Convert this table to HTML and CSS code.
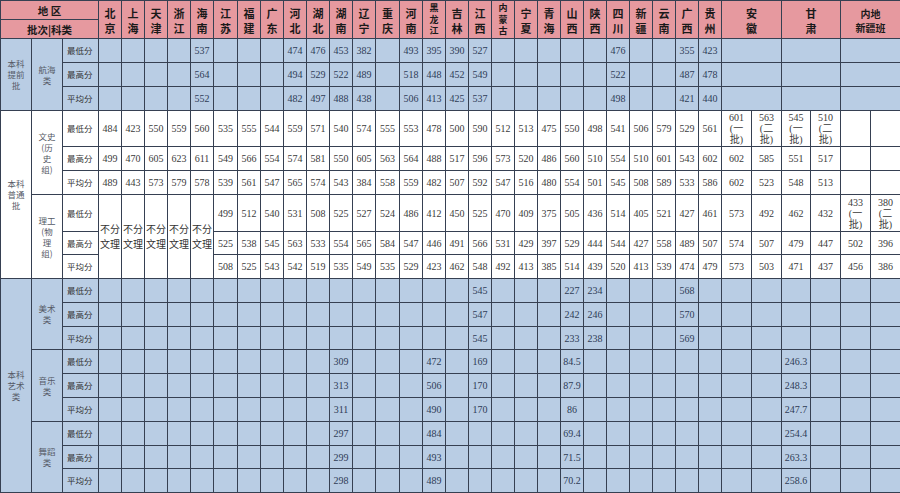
FILE: index.html
```html
<!DOCTYPE html>
<html lang="zh-CN">
<head>
<meta charset="utf-8">
<title>录取分数</title>
<link rel="stylesheet" href="styles.css">
</head>
<body>
<table class="score">
<colgroup>
<col class="c31"><col class="c31"><col class="c36">
<col class="c23"><col class="c23"><col class="c23"><col class="c23"><col class="c23"><col class="c24"><col class="c23"><col class="c23"><col class="c23"><col class="c23"><col class="c23"><col class="c23"><col class="c24"><col class="c23"><col class="c23"><col class="c23"><col class="c23"><col class="c23"><col class="c23"><col class="c23"><col class="c23"><col class="c23"><col class="c23"><col class="c23"><col class="c23"><col class="c23"><col class="c23">
<col class="c30"><col class="c30"><col class="c29"><col class="c30"><col class="c30"><col class="c30">
</colgroup>
<thead>
<tr class="h1">
<th colspan="3">地 区</th>
<th rowspan="2">北<br>京</th><th rowspan="2">上<br>海</th><th rowspan="2">天<br>津</th><th rowspan="2">浙<br>江</th><th rowspan="2">海<br>南</th><th rowspan="2">江<br>苏</th><th rowspan="2">福<br>建</th><th rowspan="2">广<br>东</th><th rowspan="2">河<br>北</th><th rowspan="2">湖<br>北</th><th rowspan="2">湖<br>南</th><th rowspan="2">辽<br>宁</th><th rowspan="2">重<br>庆</th><th rowspan="2">河<br>南</th><th rowspan="2" class="tri">黑<br>龙<br>江</th><th rowspan="2">吉<br>林</th><th rowspan="2">江<br>西</th><th rowspan="2" class="tri">内<br>蒙<br>古</th><th rowspan="2">宁<br>夏</th><th rowspan="2">青<br>海</th><th rowspan="2">山<br>西</th><th rowspan="2">陕<br>西</th><th rowspan="2">四<br>川</th><th rowspan="2">新<br>疆</th><th rowspan="2">云<br>南</th><th rowspan="2">广<br>西</th><th rowspan="2">贵<br>州</th>
<th rowspan="2" colspan="2">安<br>徽</th><th rowspan="2" colspan="2">甘<br>肃</th><th rowspan="2" colspan="2" class="sm">内地<br>新疆班</th>
</tr>
<tr class="h2"><th colspan="3">批次|科类</th></tr>
</thead>
<tbody>
<tr class="blue r24"><td rowspan="3" class="grp">本科<br>提前<br>批</td><td rowspan="3" class="grp">航海<br>类</td><td class="lb">最低分</td><td></td><td></td><td></td><td></td><td>537</td><td></td><td></td><td></td><td>474</td><td>476</td><td>453</td><td>382</td><td></td><td>493</td><td>395</td><td>390</td><td>527</td><td></td><td></td><td></td><td></td><td></td><td>476</td><td></td><td></td><td>355</td><td>423</td><td colspan="2"></td><td colspan="2"></td><td colspan="2"></td></tr>
<tr class="blue r24"><td class="lb">最高分</td><td></td><td></td><td></td><td></td><td>564</td><td></td><td></td><td></td><td>494</td><td>529</td><td>522</td><td>489</td><td></td><td>518</td><td>448</td><td>452</td><td>549</td><td></td><td></td><td></td><td></td><td></td><td>522</td><td></td><td></td><td>487</td><td>478</td><td colspan="2"></td><td colspan="2"></td><td colspan="2"></td></tr>
<tr class="blue r24"><td class="lb">平均分</td><td></td><td></td><td></td><td></td><td>552</td><td></td><td></td><td></td><td>482</td><td>497</td><td>488</td><td>438</td><td></td><td>506</td><td>413</td><td>425</td><td>537</td><td></td><td></td><td></td><td></td><td></td><td>498</td><td></td><td></td><td>421</td><td>440</td><td colspan="2"></td><td colspan="2"></td><td colspan="2"></td></tr>

<tr class="white r36"><td rowspan="6" class="grp">本科<br>普通<br>批</td><td rowspan="3" class="grp">文史<br>(历<br>史<br>组)</td><td class="lb">最低分</td><td>484</td><td>423</td><td>550</td><td>559</td><td>560</td><td>535</td><td>555</td><td>544</td><td>559</td><td>571</td><td>540</td><td>574</td><td>555</td><td>553</td><td>478</td><td>500</td><td>590</td><td>512</td><td>513</td><td>475</td><td>550</td><td>498</td><td>541</td><td>506</td><td>579</td><td>529</td><td>561</td><td>601<br>(一<br>批)</td><td>563<br>(二<br>批)</td><td>545<br>(一<br>批)</td><td>510<br>(二<br>批)</td><td></td><td></td></tr>
<tr class="white r24"><td class="lb">最高分</td><td>499</td><td>470</td><td>605</td><td>623</td><td>611</td><td>549</td><td>566</td><td>554</td><td>574</td><td>581</td><td>550</td><td>605</td><td>563</td><td>564</td><td>488</td><td>517</td><td>596</td><td>573</td><td>520</td><td>486</td><td>560</td><td>510</td><td>554</td><td>510</td><td>601</td><td>543</td><td>602</td><td>602</td><td>585</td><td>551</td><td>517</td><td></td><td></td></tr>
<tr class="white r24"><td class="lb">平均分</td><td>489</td><td>443</td><td>573</td><td>579</td><td>578</td><td>539</td><td>561</td><td>547</td><td>565</td><td>574</td><td>543</td><td>384</td><td>558</td><td>559</td><td>482</td><td>507</td><td>592</td><td>547</td><td>516</td><td>480</td><td>554</td><td>501</td><td>545</td><td>508</td><td>589</td><td>533</td><td>586</td><td>602</td><td>523</td><td>548</td><td>513</td><td></td><td></td></tr>

<tr class="white r37"><td rowspan="3" class="grp">理工<br>(物<br>理<br>组)</td><td class="lb">最低分</td><td rowspan="3" class="nf">不分<br>文理</td><td rowspan="3" class="nf">不分<br>文理</td><td rowspan="3" class="nf">不分<br>文理</td><td rowspan="3" class="nf">不分<br>文理</td><td rowspan="3" class="nf">不分<br>文理</td><td>499</td><td>512</td><td>540</td><td>531</td><td>508</td><td>525</td><td>527</td><td>524</td><td>486</td><td>412</td><td>450</td><td>525</td><td>470</td><td>409</td><td>375</td><td>505</td><td>436</td><td>514</td><td>405</td><td>521</td><td>427</td><td>461</td><td>573</td><td>492</td><td>462</td><td>432</td><td>433<br>(一<br>批)</td><td>380<br>(二<br>批)</td></tr>
<tr class="white r23"><td class="lb">最高分</td><td>525</td><td>538</td><td>545</td><td>563</td><td>533</td><td>554</td><td>565</td><td>584</td><td>547</td><td>446</td><td>491</td><td>566</td><td>531</td><td>429</td><td>397</td><td>529</td><td>444</td><td>544</td><td>427</td><td>558</td><td>489</td><td>507</td><td>574</td><td>507</td><td>479</td><td>447</td><td>502</td><td>396</td></tr>
<tr class="white r24"><td class="lb">平均分</td><td>508</td><td>525</td><td>543</td><td>542</td><td>519</td><td>535</td><td>549</td><td>535</td><td>529</td><td>423</td><td>462</td><td>548</td><td>492</td><td>413</td><td>385</td><td>514</td><td>439</td><td>520</td><td>413</td><td>539</td><td>474</td><td>479</td><td>573</td><td>503</td><td>471</td><td>437</td><td>456</td><td>386</td></tr>

<tr class="blue r24"><td rowspan="9" class="grp">本科<br>艺术<br>类</td><td rowspan="3" class="grp">美术<br>类</td><td class="lb">最低分</td><td></td><td></td><td></td><td></td><td></td><td></td><td></td><td></td><td></td><td></td><td></td><td></td><td></td><td></td><td></td><td></td><td>545</td><td></td><td></td><td></td><td>227</td><td>234</td><td></td><td></td><td></td><td>568</td><td></td><td></td><td></td><td></td><td></td><td></td><td></td></tr>
<tr class="blue r24"><td class="lb">最高分</td><td></td><td></td><td></td><td></td><td></td><td></td><td></td><td></td><td></td><td></td><td></td><td></td><td></td><td></td><td></td><td></td><td>547</td><td></td><td></td><td></td><td>242</td><td>246</td><td></td><td></td><td></td><td>570</td><td></td><td></td><td></td><td></td><td></td><td></td><td></td></tr>
<tr class="blue r23"><td class="lb">平均分</td><td></td><td></td><td></td><td></td><td></td><td></td><td></td><td></td><td></td><td></td><td></td><td></td><td></td><td></td><td></td><td></td><td>545</td><td></td><td></td><td></td><td>233</td><td>238</td><td></td><td></td><td></td><td>569</td><td></td><td></td><td></td><td></td><td></td><td></td><td></td></tr>
<tr class="blue r24"><td rowspan="3" class="grp">音乐<br>类</td><td class="lb">最低分</td><td></td><td></td><td></td><td></td><td></td><td></td><td></td><td></td><td></td><td></td><td>309</td><td></td><td></td><td></td><td>472</td><td></td><td>169</td><td></td><td></td><td></td><td>84.5</td><td></td><td></td><td></td><td></td><td></td><td></td><td></td><td></td><td>246.3</td><td></td><td></td><td></td></tr>
<tr class="blue r24"><td class="lb">最高分</td><td></td><td></td><td></td><td></td><td></td><td></td><td></td><td></td><td></td><td></td><td>313</td><td></td><td></td><td></td><td>506</td><td></td><td>170</td><td></td><td></td><td></td><td>87.9</td><td></td><td></td><td></td><td></td><td></td><td></td><td></td><td></td><td>248.3</td><td></td><td></td><td></td></tr>
<tr class="blue r24"><td class="lb">平均分</td><td></td><td></td><td></td><td></td><td></td><td></td><td></td><td></td><td></td><td></td><td>311</td><td></td><td></td><td></td><td>490</td><td></td><td>170</td><td></td><td></td><td></td><td>86</td><td></td><td></td><td></td><td></td><td></td><td></td><td></td><td></td><td>247.7</td><td></td><td></td><td></td></tr>
<tr class="blue r24"><td rowspan="3" class="grp">舞蹈<br>类</td><td class="lb">最低分</td><td></td><td></td><td></td><td></td><td></td><td></td><td></td><td></td><td></td><td></td><td>297</td><td></td><td></td><td></td><td>484</td><td></td><td></td><td></td><td></td><td></td><td>69.4</td><td></td><td></td><td></td><td></td><td></td><td></td><td></td><td></td><td>254.4</td><td></td><td></td><td></td></tr>
<tr class="blue r23"><td class="lb">最高分</td><td></td><td></td><td></td><td></td><td></td><td></td><td></td><td></td><td></td><td></td><td>299</td><td></td><td></td><td></td><td>493</td><td></td><td></td><td></td><td></td><td></td><td>71.5</td><td></td><td></td><td></td><td></td><td></td><td></td><td></td><td></td><td>263.3</td><td></td><td></td><td></td></tr>
<tr class="blue r24"><td class="lb">平均分</td><td></td><td></td><td></td><td></td><td></td><td></td><td></td><td></td><td></td><td></td><td>298</td><td></td><td></td><td></td><td>489</td><td></td><td></td><td></td><td></td><td></td><td>70.2</td><td></td><td></td><td></td><td></td><td></td><td></td><td></td><td></td><td>258.6</td><td></td><td></td><td></td></tr>
</tbody>
</table>
</body>
</html>
```
FILE: styles.css
```css
html, body {
  margin: 0;
  padding: 0;
  background: #ffffff;
}
body {
  width: 900px;
  height: 493px;
  overflow: hidden;
}
.score {
  width: 900px;
  border-collapse: collapse;
  table-layout: fixed;
  font-family: "Liberation Serif", "Noto Sans CJK SC", serif;
  font-size: 10px;
  color: #3a3a3a;
}
.c23 { width: 23px; }
.c24 { width: 24px; }
.c29 { width: 29px; }
.c30 { width: 30px; }
.c31 { width: 31px; }
.c36 { width: 36px; }

.score th,
.score td {
  border: 1px solid #364052;
  padding: 0;
  text-align: center;
  vertical-align: middle;
  overflow: hidden;
  white-space: nowrap;
  line-height: 11px;
}
.score thead th {
  background: #e6999f;
  font-family: "Noto Sans CJK SC", sans-serif;
  font-weight: bold;
  font-size: 11px;
  line-height: 14.5px;
  color: #1a1a1a;
  padding-top: 2px;
}
.score thead .tri {
  font-size: 9px;
  line-height: 11.8px;
  padding-top: 0;
}
.score thead .sm {
  font-size: 10px;
  line-height: 13.5px;
}
.h1, .h2 { height: 19px; }
.score .h1 th[colspan="3"],
.score .h2 th {
  font-size: 10.5px;
  line-height: 15px;
  padding-top: 0;
}

.r23 { height: 23px; }
.r24 { height: 24px; }
.r36 { height: 36px; }
.r37 { height: 37px; }

.blue td {
  background: #b9cde4;
  color: #2e3b56;
}
.white td {
  background: #ffffff;
}
.score .grp {
  font-family: "Noto Sans CJK SC", sans-serif;
  font-size: 8.5px;
  line-height: 11px;
  color: #555a66;
}
.score .lb {
  font-family: "Noto Sans CJK SC", sans-serif;
  font-size: 8.5px;
  color: #333333;
  text-align: left;
  padding-left: 4px;
}
.score .nf {
  font-family: "Noto Sans CJK SC", sans-serif;
  font-size: 10px;
  line-height: 14.5px;
  color: #333333;
}
```
